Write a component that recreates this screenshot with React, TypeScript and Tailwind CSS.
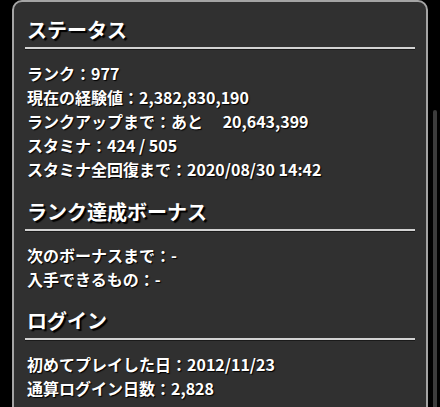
import React from "react";

const sections: { title: string; lines: string[] }[] = [
  {
    title: "ステータス",
    lines: [
      "ランク：977",
      "現在の経験値：2,382,830,190",
      "ランクアップまで：あと　 20,643,399",
      "スタミナ：424 / 505",
      "スタミナ全回復まで：2020/08/30 14:42",
    ],
  },
  {
    title: "ランク達成ボーナス",
    lines: ["次のボーナスまで：-", "入手できるもの：-"],
  },
  {
    title: "ログイン",
    lines: ["初めてプレイした日：2012/11/23", "通算ログイン日数：2,828"],
  },
];

export default function App() {
  return (
    <div
      className="w-[440px] h-[407px] bg-black flex overflow-hidden"
      style={{ fontFamily: '"Noto Sans CJK JP", "Noto Sans", sans-serif' }}
    >
      <div className="w-[12px] shrink-0" />
      <div className="w-[416px] shrink-0 h-[430px] bg-[#303030] border-2 border-[#a4a4a4] rounded-t-[10px] pl-[11px] pr-[11px] pt-[14px]">
        {sections.map((s, i) => (
          <div key={s.title} className={i === 0 ? "" : i === 1 ? "mt-[17px]" : "mt-[16px]"}>
            <div className="border-b-2 border-[#d2d2d2] pb-[3px] shadow-[0_1px_0_#1a1a1a]">
              <div className="text-[20px] leading-[28px] font-bold text-white pl-[2px] [text-shadow:2px_2px_1px_#000]">
                {s.title}
              </div>
            </div>
            <div className="pt-[12px] pl-[2px]">
              {s.lines.map((l) => (
                <div
                  key={l}
                  className="text-[16px] leading-[24px] font-bold text-white whitespace-pre [text-shadow:1px_1px_1px_#000]"
                >
                  {l}
                </div>
              ))}
            </div>
          </div>
        ))}
      </div>
      <div className="flex-1 relative">
        <div className="absolute left-[5px] top-[110px] w-[4px] h-[320px] rounded-t-full bg-[#3c3c3c]" />
      </div>
    </div>
  );
}
